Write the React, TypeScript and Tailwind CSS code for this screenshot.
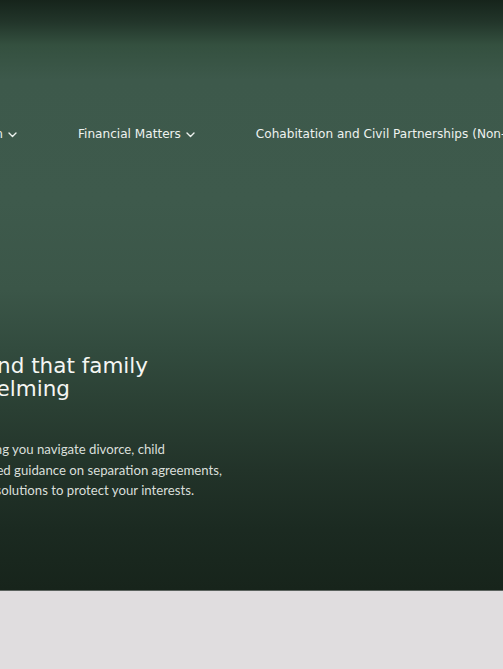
import React from "react";

function Chevron() {
  return (
    <svg width="9" height="6" viewBox="0 0 9 6" fill="none" className="shrink-0 mt-[2px]">
      <path d="M1 1l3.5 3.5L8 1" stroke="currentColor" strokeWidth="1.4" strokeLinecap="round" strokeLinejoin="round" />
    </svg>
  );
}

function NavItem({ label, chevron = true }: { label: string; chevron?: boolean }) {
  return (
    <span className="flex shrink-0 items-center gap-[5px]">
      {label}
      {chevron && <Chevron />}
    </span>
  );
}

function Line({ w, children }: { w: string; children: React.ReactNode }) {
  return (
    <div className={`flex justify-end whitespace-nowrap ${w}`}>
      <span className="shrink-0">{children}</span>
    </div>
  );
}

export default function App() {
  return (
    <div className="min-h-screen w-full overflow-hidden bg-[#e0dddf]">
      <section className="h-[591px] overflow-hidden border-b border-[#5b625e] bg-[linear-gradient(180deg,#16241b_0px,#22352a_22px,#34503f_45px,#3d594b_80px,#3e5a4c_200px,#3b5648_290px,#324b3e_350px,#2a3f33_410px,#223329_470px,#1b2a21_530px,#17241b_590px)]">
        <nav className="flex items-center gap-[61px] whitespace-nowrap pt-[124px] font-['DejaVu_Sans',sans-serif] text-[12.1px] leading-[20px] text-[#eef2ef]">
          <div className="flex w-[17px] shrink-0 justify-end">
            <NavItem label="Divorce and Separation" />
          </div>
          <NavItem label="Financial Matters" />
          <NavItem label="Cohabitation and Civil Partnerships (Non-Married Couples)" />
        </nav>

        <h1 className="mt-[210px] font-['DejaVu_Sans',sans-serif] text-[21.5px] font-normal leading-[23px] text-[#f5f6f3]">
          <Line w="w-[148px]">We understand that family</Line>
          <Line w="w-[70px]">matters can feel overwhelming</Line>
        </h1>

        <div className="mt-[39px] font-['Lato',sans-serif] text-[13.2px] leading-[20.5px] text-[#d9dfda]">
          <Line w="w-[165px]">We specialise in helping you navigate divorce, child</Line>
          <Line w="w-[222px]">arrangements, and provide tailored guidance on separation agreements,</Line>
          <Line w="w-[194px]">offering practical and sensitive solutions to protect your interests.</Line>
        </div>
      </section>
    </div>
  );
}
